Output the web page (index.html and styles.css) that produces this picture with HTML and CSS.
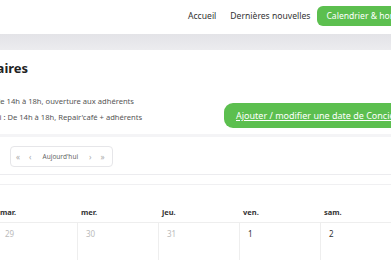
FILE: index.html
```html
<!DOCTYPE html>
<html lang="fr">
<head>
  <meta charset="UTF-8" />
  <title>Calendrier & horaires</title>
  <meta name="viewport" content="width=device-width, initial-scale=1.0">
  <link rel="stylesheet" href="styles.css">
</head>
<body>

<header class="topbar">
  <nav class="menu">
    <a href="#">Accueil</a>
    <a href="#">Dernières nouvelles</a>
    <a href="#" class="active">Calendrier &amp; horaires</a>
  </nav>
</header>
<div class="band"></div>

<main class="page">
  <section class="hours">
    <h1>Horaires</h1>
    <div class="hours-row">
      <div class="hours-list">
        <p>Mercredi de 14h à 18h, ouverture aux adhérents</p>
        <p>Samedi : De 14h à 18h, Repair'café + adhérents</p>
      </div>
      <a href="#" class="add-btn">Ajouter / modifier une date de Conciergerie</a>
    </div>
  </section>

  <div class="toolbar">
    <div class="pager">
      <span class="arrow">&laquo;</span>
      <span class="arrow">&lsaquo;</span>
      <span class="today">Aujourd'hui</span>
      <span class="arrow">&rsaquo;</span>
      <span class="arrow">&raquo;</span>
    </div>
  </div>
  <div class="spacer"></div>

  <div class="calendar">
    <div class="day-head">lun.</div>
    <div class="day-head">mar.</div>
    <div class="day-head">mer.</div>
    <div class="day-head">jeu.</div>
    <div class="day-head">ven.</div>
    <div class="day-head">sam.</div>
    <div class="cell muted">28</div>
    <div class="cell muted">29</div>
    <div class="cell muted">30</div>
    <div class="cell muted">31</div>
    <div class="cell">1</div>
    <div class="cell">2</div>
  </div>
</main>

</body>
</html>
```

FILE: styles.css
```css
* {
  box-sizing: border-box;
}

body {
  font-family: 'Noto Sans', sans-serif;
  margin: 0;
  background-color: #fff;
  color: #222;
  overflow: hidden;
}

.topbar {
  height: 34px;
  display: flex;
  align-items: center;
  padding-left: 188px;
  padding-bottom: 2px;
}

.menu {
  display: flex;
  align-items: center;
  gap: 14px;
  white-space: nowrap;
}

.menu a {
  font-size: 8.6px;
  color: #333;
  text-decoration: none;
}

.menu a.active {
  background: #5cbf4f;
  color: #fff;
  padding: 4px 9px;
  border-radius: 6px;
  margin-left: -7px;
}

.band {
  height: 16px;
  background: linear-gradient(#e3e3e7, #ececef);
}

.page {
  width: 560px;
}

.hours {
  padding-top: 9px;
}

h1 {
  font-size: 13px;
  font-weight: 700;
  margin: 0 0 0 -27px;
  height: 18px;
}

.hours-row {
  display: flex;
  align-items: flex-start;
  margin-top: 19px;
}

.hours-list {
  width: 224px;
  margin-left: -38px;
  margin-right: 38px;
}

.hours-list p {
  font-size: 7.6px;
  line-height: 10px;
  color: #555;
  margin: 0 0 6px 0;
  white-space: nowrap;
}

.hours-list p + p {
  margin-left: 13px;
}

.add-btn {
  background: #5cbf4f;
  color: #fff;
  font-size: 9px;
  line-height: 13px;
  padding: 6px 12px;
  border-radius: 9px;
  height: 25px;
  white-space: nowrap;
  margin-top: 7px;
}

.toolbar {
  margin-top: 6px;
  border-top: 3px solid #f4f4f6;
  padding: 6px 0 7px 10px;
  border-bottom: 1px solid #ececef;
}

.pager {
  display: inline-flex;
  align-items: center;
  gap: 9px;
  height: 21px;
  width: 103px;
  padding: 0 5px;
  border: 1px solid #e6e6e9;
  border-radius: 4px;
  font-size: 6.5px;
  color: #666;
}

.pager .arrow {
  color: #aaa;
  font-size: 8px;
}

.pager .today {
  margin: 0 2px;
}

.spacer {
  height: 10px;
  border-bottom: 1px solid #f0f0f2;
}

.calendar {
  display: grid;
  grid-template-columns: repeat(6, 81px);
  margin-left: -85px;
  margin-top: 21px;
}

.day-head {
  font-size: 7.5px;
  font-weight: 700;
  color: #333;
  padding: 1px 0 5px 4px;
  border-bottom: 1px solid #eee;
}

.cell {
  font-size: 8px;
  color: #333;
  padding: 5px 8px;
  height: 40px;
  border-left: 1px solid #eee;
}

.cell.muted {
  color: #bbb;
}
```
